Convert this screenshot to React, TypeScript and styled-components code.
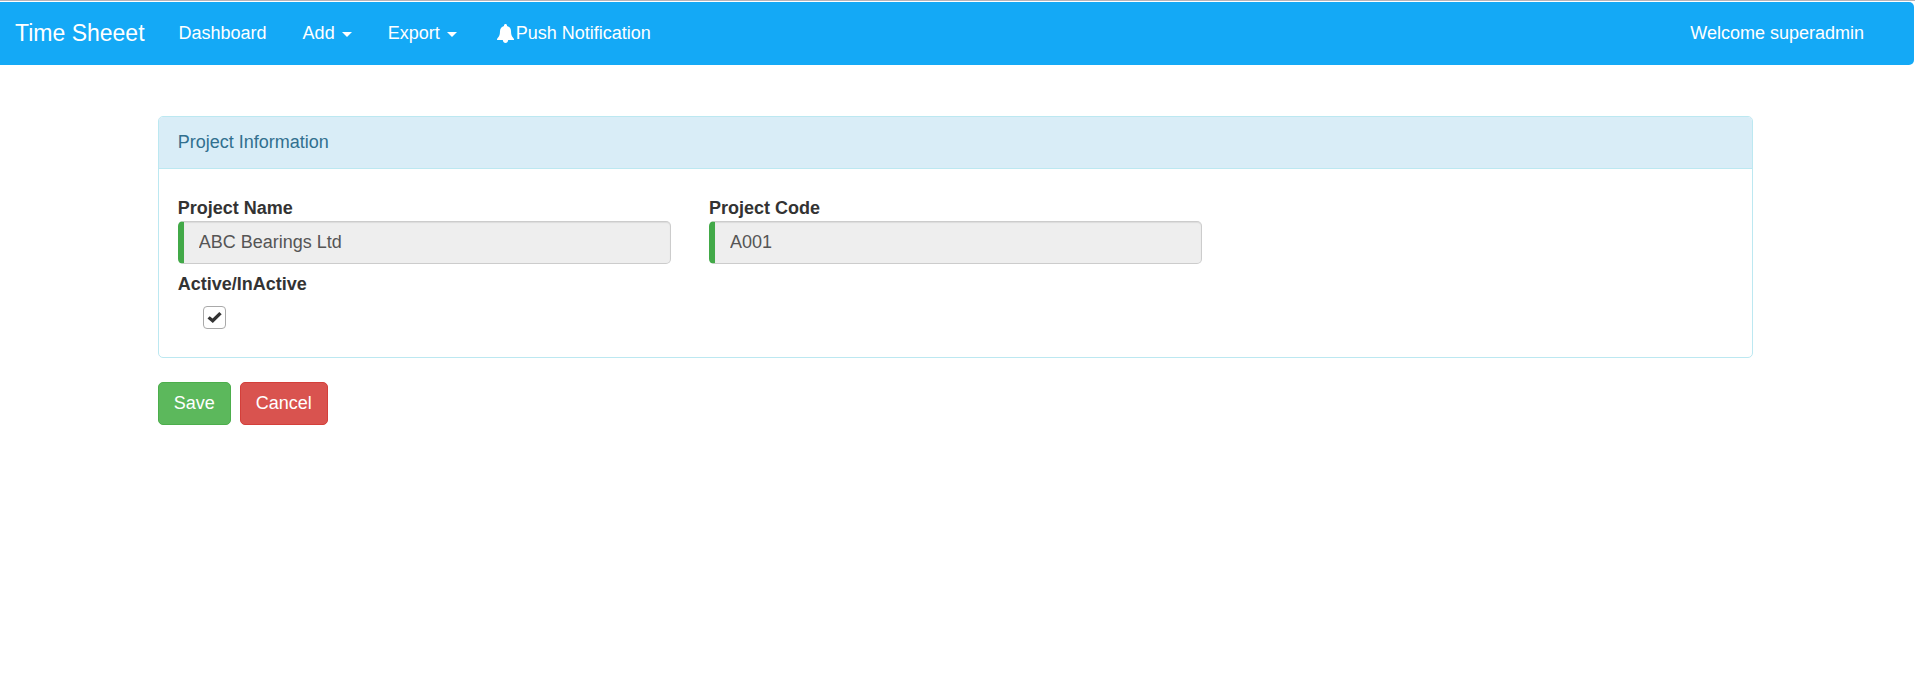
import React, { useState } from "react";
import styled, { createGlobalStyle, css } from "styled-components";

const GlobalStyle = createGlobalStyle`
  *, *::before, *::after {
    box-sizing: border-box;
  }
  body {
    margin: 0;
    background: #fff;
    color: #333;
    font-family: "Liberation Sans", Arial, Helvetica, sans-serif;
    font-size: 18px;
    line-height: 25px;
  }
  button, input {
    font: inherit;
  }
`;

const Page = styled.div`
  padding-right: 1px;
  border-top: 1px solid #b9b3b8;
`;

const Navbar = styled.nav`
  display: flex;
  align-items: center;
  height: 63px;
  margin-top: 1px;
  padding-right: 32px;
  border-radius: 0 5px 5px 0;
  background: #14a9f6;
`;

const navText = css`
  display: flex;
  align-items: center;
  padding: 0 18px;
  border: 0;
  background: none;
  color: #fff;
  text-decoration: none;
  white-space: nowrap;
`;

const Brand = styled.a`
  ${navText}
  padding: 0 16px 0 15px;
  font-size: 23px;
`;

const NavList = styled.ul`
  display: flex;
  flex: 1;
  margin: 0;
  padding: 0;
  list-style: none;
`;

const NavItem = styled.li<{ $end?: boolean }>`
  margin-left: ${(p) => (p.$end ? "auto" : "0")};
`;

const NavLink = styled.a`
  ${navText}
  gap: 2px;
`;

const NavButton = styled.button`
  ${navText}
  gap: 7px;
  cursor: pointer;
`;

const Caret = styled.span`
  border-top: 5px solid #fff;
  border-right: 5px solid transparent;
  border-left: 5px solid transparent;
  margin-top: 2px;
`;

const Bell = styled.svg`
  margin-left: 4px;
`;

const Content = styled.main`
  padding: 51px 3px 40px 0;
`;

const Form = styled.form`
  width: 83.5%;
  margin: 0 auto;
`;

const Panel = styled.section`
  margin-bottom: 24px;
  border: 1px solid #bce8f1;
  border-radius: 5px;
`;

const PanelHeading = styled.h1`
  margin: 0;
  padding: 13px 19px;
  border-bottom: 1px solid #bce8f1;
  border-radius: 4px 4px 0 0;
  background: #d9edf7;
  color: #31708f;
  font-size: inherit;
  font-weight: 400;
`;

const Fields = styled.div`
  display: grid;
  grid-template-columns: repeat(3, 1fr);
  row-gap: 8px;
  padding: 27px 0 20px;
`;

const Field = styled.div<{ $newRow?: boolean }>`
  display: flex;
  flex-direction: column;
  grid-column-start: ${(p) => (p.$newRow ? 1 : "auto")};
  padding: 0 19px;
`;

const Label = styled.label`
  font-weight: 700;
`;

const TextInput = styled.input`
  width: 100%;
  height: 43px;
  padding: 0 15px;
  border: 1px solid #ccc;
  border-left: 6px solid #42a948;
  border-radius: 5px;
  background: #eee;
  box-shadow: inset 0 1px 1px rgba(0, 0, 0, 0.08);
  color: #555;
`;

const CheckHolder = styled.span`
  display: grid;
  width: 23px;
  height: 23px;
  margin: 9px 0 8px 25px;
  place-items: center;

  > * {
    grid-area: 1 / 1;
  }
`;

const CheckInput = styled.input`
  width: 23px;
  height: 23px;
  margin: 0;
  border: 1px solid #a9a9a9;
  border-radius: 4px;
  appearance: none;
  background: #fff;
`;

const CheckMark = styled.svg`
  pointer-events: none;
`;

const Actions = styled.div`
  display: flex;
  gap: 9px;
`;

const Button = styled.button<{ $fill: string; $edge: string }>`
  height: 43px;
  padding: 0 15px;
  border: 1px solid ${(p) => p.$edge};
  border-radius: 5px;
  background: ${(p) => p.$fill};
  color: #fff;
  cursor: pointer;
`;

const BellIcon = () => (
  <Bell width="17" height="19" viewBox="0 0 17 19" fill="#fff" aria-hidden="true">
    <path d="M8.500 0c.9 0 1.500.7 1.500 1.500v.5c2.300.6 3.900 2.400 4 4.900.1 3.300.4 5.200 2.300 7 .5.500.7 1 .7 1.700v.4H0v-.4c0-.7.2-1.200.7-1.700 1.900-1.800 2.200-3.700 2.300-7C3.100 4.400 4.700 2.600 7 2v-.5C7 .7 7.600 0 8.500 0zM5.800 16h5.400C11 17.900 9.900 19 8.500 19s-2.500-1.100-2.700-3z" />
  </Bell>
);

export default function App() {
  const [active, setActive] = useState(true);
  return (
    <>
      <GlobalStyle />
      <Page>
        <Navbar>
          <Brand href="#">Time Sheeet</Brand>
          <NavList>
            <NavItem>
              <NavLink href="#dashboard">Dashboard</NavLink>
            </NavItem>
            <NavItem>
              <NavButton type="button" aria-haspopup="true">
                Add <Caret />
              </NavButton>
            </NavItem>
            <NavItem>
              <NavButton type="button" aria-haspopup="true">
                Export <Caret />
              </NavButton>
            </NavItem>
            <NavItem>
              <NavLink href="#push">
                <BellIcon />
                Push Notification
              </NavLink>
            </NavItem>
            <NavItem $end>
              <NavLink href="#account">Welcome superadmin</NavLink>
            </NavItem>
          </NavList>
        </Navbar>
        <Content>
          <Form onSubmit={(e) => e.preventDefault()}>
            <Panel>
              <PanelHeading>Project Information</PanelHeading>
              <Fields>
                <Field>
                  <Label htmlFor="project-name">Project Name</Label>
                  <TextInput id="project-name" type="text" defaultValue="ABC Bearings Ltd" disabled />
                </Field>
                <Field>
                  <Label htmlFor="project-code">Project Code</Label>
                  <TextInput id="project-code" type="text" defaultValue="A001" disabled />
                </Field>
                <Field $newRow>
                  <Label htmlFor="active">Active/InActive</Label>
                  <CheckHolder>
                    <CheckInput
                      id="active"
                      type="checkbox"
                      checked={active}
                      onChange={(e) => setActive(e.target.checked)}
                    />
                    {active && (
                      <CheckMark width="15" height="13" viewBox="0 0 15 13" aria-hidden="true">
                        <path d="M0.500 7.500 2.700 5.200 5.600 7.600 12.300 1l2.400 2.200L5.800 12z" fill="#333" />
                      </CheckMark>
                    )}
                  </CheckHolder>
                </Field>
              </Fields>
            </Panel>
            <Actions>
              <Button type="submit" $fill="#5cb85c" $edge="#4cae4c">
                Save
              </Button>
              <Button type="button" $fill="#d9534f" $edge="#d43f3a">
                Cancel
              </Button>
            </Actions>
          </Form>
        </Content>
      </Page>
    </>
  );
}
